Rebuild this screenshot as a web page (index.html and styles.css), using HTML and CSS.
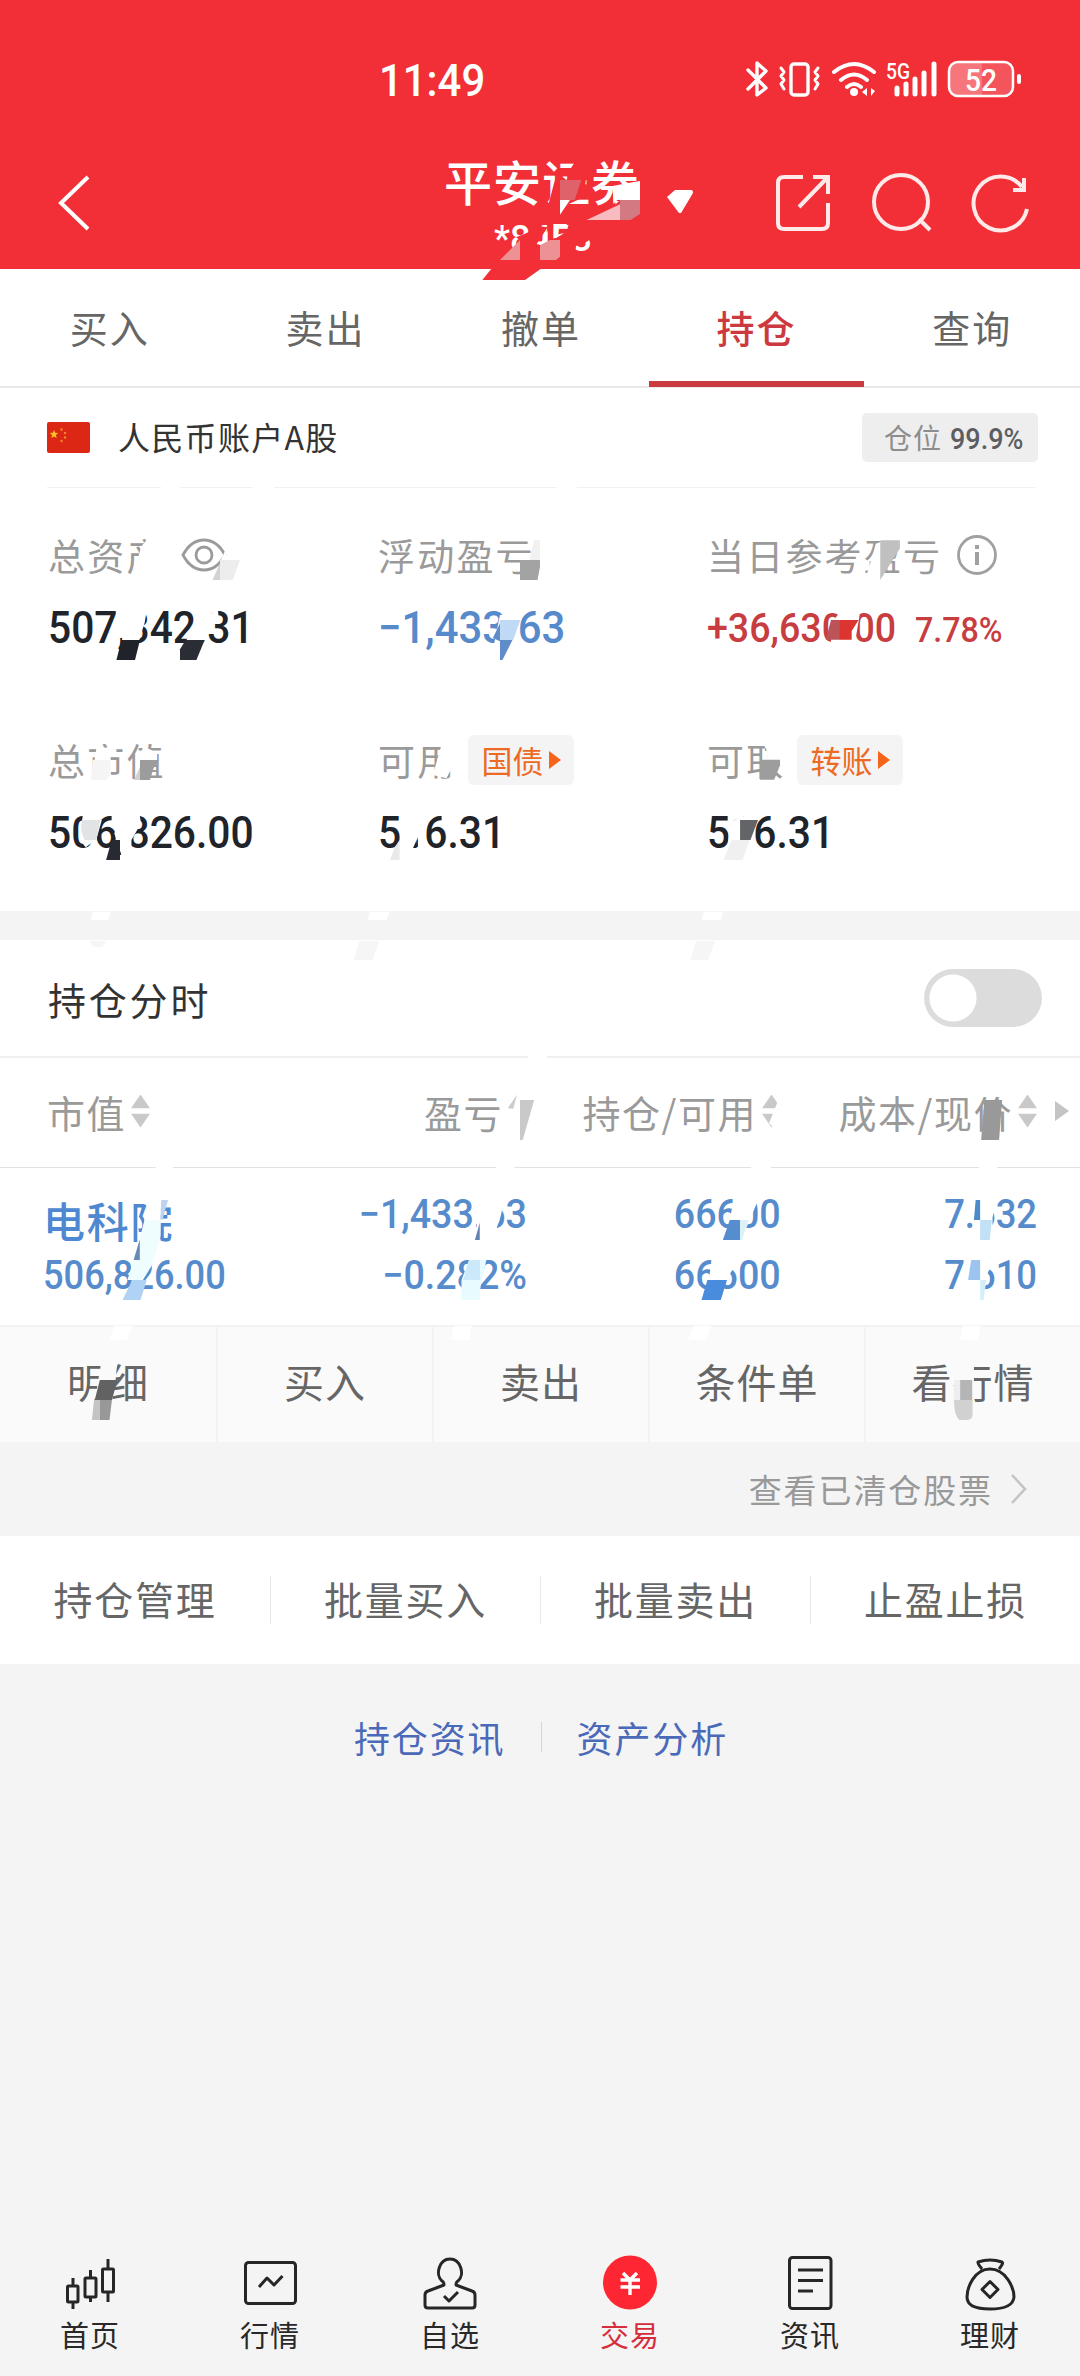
FILE: index.html
```html
<!DOCTYPE html>
<html lang="zh-CN">
<head>
<meta charset="utf-8">
<title>持仓</title>
<link rel="stylesheet" href="styles.css">
</head>
<body>
<div class="app">
  <header class="top">
    <div class="status">
      <span class="num clock">11:49</span>
      <svg class="status-icons" width="290" height="44" viewBox="740 57 290 44" fill="none" stroke="#fff" stroke-width="3.4" stroke-linecap="round" stroke-linejoin="round">
        <path d="M748 70L766 88L757 95V63L766 71L748 89"/>
        <rect x="791" y="64" width="17" height="31" rx="3"/>
        <path d="M781 68l3 4-3 4 3 4-3 4 3 5M818 68l-3 4 3 4-3 4 3 4-3 5" stroke-width="3"/>
        <path d="M834 72Q854 56 874 72M841 80Q854 69 867 80M847 87Q854 81 861 87" stroke-width="4"/>
        <circle cx="854" cy="92" r="3" fill="#fff" stroke-width="2"/>
        <path d="M867 88v8l-5-4zM871 88v8l4-5z" fill="#fff" stroke="none"/>
        <path d="M897 88v6M906 84v10M915 79v15M924 73v21M934 64v30" stroke-width="5"/>
        <rect x="949" y="62" width="64" height="34" rx="9" stroke-width="2.5" fill="#fff" fill-opacity=".18"/>
        <path d="M950 71q0-8 8-8h24v32h-24q-8 0-8-8z" fill="#fff" fill-opacity=".2" stroke="none"/>
        <path d="M1019 76v6" stroke-width="4"/>
        <text class="svg-num" x="886" y="79" font-size="22" textLength="24" lengthAdjust="spacingAndGlyphs">5G</text>
        <text class="svg-num" x="965" y="91" font-size="32" textLength="32" lengthAdjust="spacingAndGlyphs">52</text>
      </svg>
    </div>
    <div class="titlebar">
      <svg class="back" width="40" height="60" viewBox="0 0 40 60" fill="none" stroke="#fff" stroke-width="4"><path d="M34 4L7 30L34 56"/></svg>
      <div class="title"><h1>平安证券</h1><span class="num acct">*8453</span></div>
      <svg class="caret" width="28" height="26" viewBox="0 0 28 26"><path d="M9 1H26Q27 2 27 4L15 24H13L1 8Z" fill="#fff"/></svg>
      <svg class="tools" width="264" height="64" viewBox="769 170 264 64" fill="none" stroke="#ffe9e9" stroke-width="4">
        <path d="M802 177H783Q777 177 777 183V223Q777 229 783 229H821Q827 229 827 223V203M798 207L826 178M812 177H827V194"/>
        <ellipse cx="900" cy="202" rx="27" ry="27"/><path d="M918 219L929 230"/>
        <path d="M1026 209A27 27 0 1 1 1021 187M1023 178V190H1012"/>
      </svg>
    </div>
  </header>

  <nav class="tabs"><a>买入</a><a>卖出</a><a>撤单</a><a class="on">持仓</a><a>查询</a></nav>

  <section class="account">
    <svg width="43" height="31" viewBox="0 0 43 31"><rect width="43" height="31" rx="2" fill="#dc2715"/><path d="M7 8l1.2 2.8 3 .2-2.3 2 .8 3L7 14.400l-2.700 1.600.8-3-2.300-2 3-.2z" fill="#ffc321"/><g fill="#f08a24"><circle cx="14.500" cy="7.500" r="1.200"/><circle cx="18" cy="11" r="1.200"/><circle cx="18" cy="15.500" r="1.200"/><circle cx="14.500" cy="19" r="1.200"/></g></svg>
    <span class="account-name">人民币账户A股</span>
    <span class="badge">仓位<b class="num">99.9%</b></span>
  </section>

  <section class="stats">
    <div class="stat">
      <div class="label">总资产<svg class="eye" width="46" height="34" viewBox="0 0 46 34" fill="none" stroke="#9b9b9b" stroke-width="2.800"><path d="M2 17Q10 2 23 2T44 17Q36 32 23 32T2 17Z"/><circle cx="23" cy="17" r="8"/></svg></div>
      <div class="value"><span class="num">507,342.31</span></div>
    </div>
    <div class="stat">
      <div class="label">浮动盈亏</div>
      <div class="value blue"><span class="num">−1,433.63</span></div>
    </div>
    <div class="stat">
      <div class="label">当日参考盈亏<svg class="info" width="42" height="42" viewBox="0 0 42 42" fill="none" stroke="#a0a0a0" stroke-width="2.800"><circle cx="21" cy="21" r="18.500"/><path d="M21 18V31M21 11v4" stroke-width="4"/></svg></div>
      <div class="value red"><span class="num gain">+36,630.00</span><span class="num rate">7.78%</span></div>
    </div>
    <div class="stat">
      <div class="label">总市值</div>
      <div class="value"><span class="num">506,826.00</span></div>
    </div>
    <div class="stat">
      <div class="label">可用<span class="chip">国债<i></i></span></div>
      <div class="value"><span class="num">516.31</span></div>
    </div>
    <div class="stat">
      <div class="label">可取<span class="chip">转账<i></i></span></div>
      <div class="value"><span class="num">516.31</span></div>
    </div>
  </section>

  <section class="intraday"><span>持仓分时</span><span class="switch"></span></section>

  <section class="thead">
    <span class="c1">市值<i class="sort"></i></span>
    <span class="c2">盈亏<i class="sort"></i></span>
    <span class="c3">持仓/可用<i class="sort"></i></span>
    <span class="c4">成本/现价<i class="sort"></i></span>
    <i class="more"></i>
  </section>

  <section class="holding">
    <div class="c1"><strong>电科院</strong><span class="num">506,826.00</span></div>
    <div class="c2"><span class="num">−1,433.63</span><span class="num">−0.282%</span></div>
    <div class="c3"><span class="num">66600</span><span class="num">66600</span></div>
    <div class="c4"><span class="num">7.632</span><span class="num">7.610</span></div>
  </section>

  <nav class="actions"><a>明细</a><a>买入</a><a>卖出</a><a>条件单</a><a>看行情</a></nav>

  <div class="cleared"><span>查看已清仓股票</span><svg width="20" height="34" viewBox="0 0 20 34" fill="none" stroke="#c4c4c4" stroke-width="2.500"><path d="M3 3L16 17L3 31"/></svg></div>

  <nav class="batch"><a>持仓管理</a><a>批量买入</a><a>批量卖出</a><a>止盈止损</a></nav>

  <div class="links"><a>持仓资讯</a><i></i><a>资产分析</a></div>

  <footer class="bottom">
    <a><svg width="60" height="60" viewBox="60 2254 60 60" class="line"><rect x="67.500" y="2286" width="10.500" height="16" rx="1"/><path d="M73 2278v8M73 2302v7"/><rect x="85" y="2278" width="11" height="19" rx="1"/><path d="M90.500 2270v8M90.500 2297v5"/><rect x="102.500" y="2269" width="11" height="23" rx="1"/><path d="M108 2259v10M108 2292v10"/></svg>首页</a>
    <a><svg width="60" height="60" viewBox="240 2254 60 60" class="line"><rect x="245.500" y="2262.500" width="50" height="41" rx="3"/><path d="M259 2287l8-9 7 7 8.500-9"/></svg>行情</a>
    <a><svg width="60" height="60" viewBox="421 2254 60 60" class="line"><path d="M445 2285Q445 2282 443 2281C436 2275 440 2259 451 2259S466 2275 459 2281Q457 2282 457 2285L473 2291Q476 2292 476 2295V2305Q476 2308 473 2308H429Q426 2308 426 2305V2295Q426 2292 429 2291Z"/><path d="M445 2296l5 5 9-9"/></svg>自选</a>
    <a class="on"><svg width="60" height="60" viewBox="601 2254 60 60"><circle cx="631" cy="2282.500" r="27" fill="#ff2634"/><path d="M624 2273l7 7 7-7M621.500 2280h19.500M621.500 2287h19.500M631 2279v16" fill="none" stroke="#fff" stroke-width="3.400"/></svg>交易</a>
    <a><svg width="60" height="60" viewBox="782 2254 60 60" class="line"><rect x="791.500" y="2257.500" width="41.500" height="51" rx="3"/><path d="M800 2270h25M800 2280.500h25M800 2291h15"/></svg>资讯</a>
    <a><svg width="60" height="60" viewBox="962 2254 60 60" class="line"><path d="M984 2269Q979 2263 980 2262Q992 2258 1004 2262Q1006 2263 1001 2269M992 2269C976 2269 969 2288 969 2297Q969 2309 992 2309T1016 2297C1016 2288 1008 2269 992 2269Z"/><path d="M992 2281.500l8 8-8 8-8-8z"/></svg>理财</a>
  </footer>

  <!-- loose paper-cut fragments scattered over the page -->
  <svg class="shards" width="1080" height="1440" viewBox="0 0 1080 1440">
    <g transform="translate(420 140) scale(.33333)">
      <path d="M468 60H515V118H498L494 145L478 178L440 195L385 195L402 130L412 100L440 120L448 92ZM585 195L660 120V240H500ZM300 300L288 292L308 284L328 275V255L383 262L350 312L372 318L398 300L440 275L448 245H516V295L490 312L468 318L465 345H290ZM216 384H366L315 420H187Z" fill="#f22f37"/>
      <path d="M400 252H440V264H412V290L400 296ZM383 272V305L360 314Z" fill="#fff"/>
      <path d="M300 300V360H240ZM360 316L390 300H420V350L408 360H360Z" fill="#ee9194"/>
      <path d="M420 180H450L420 224Z" fill="#fff"/>
      <path d="M420 120H484L464 180H420Z" fill="#df626b"/>
      <path d="M578 138L620 130L660 123V180H592L580 192Z" fill="#fff"/>
      <path d="M500 240L600 193V240Z" fill="#f8bcc0"/><path d="M600 180H660V222L632 240H600Z" fill="#d27981"/>
    </g>
    <g transform="translate(0 500) scale(.35714 .33333)">
      <path d="M395 140L412 118L455 112V220H375ZM625 165L635 140V180H618Z" fill="#fff"/>
      <path d="M595 240L616 190V240Z" fill="#d2d2d2"/><path d="M616 180H672L652 240H616Z" fill="#ededed"/>
      <path d="M1482 180L1496 120H1512V180Z" fill="#f1f1f1"/><path d="M1456 180H1512V200L1505 240H1456Z" fill="#a3a3a3"/>
      <path d="M342 400L350 325H412L405 368L390 420H342ZM545 378L610 325L612 350L583 385L580 420H522Z" fill="#fff"/>
      <path d="M340 420H392L378 480H326Z" fill="#202329"/><path d="M520 420H573L550 480H504V448Z" fill="#2b2d34"/>
      <path d="M1400 345H1450V450H1380Z" fill="#fff"/><path d="M1400 360H1457L1437 420H1400Z" fill="#c0daf5"/><path d="M1400 420H1435L1407 480H1400ZM1380 414L1400 370V424Z" fill="#608dca"/>
      <path d="M270 745L255 840H310V765H326V740ZM390 770L402 738L440 760V780H392Z" fill="#fff"/><path d="M260 780H310V820L298 840H254Z" fill="#f5f5f5"/>
      <path d="M392 780H445L430 805L420 840H392Z" fill="#9c9c9c"/><path d="M375 840L392 800V840Z" fill="#d1d1d1"/>
      <path d="M1236 735L1212 825L1250 835L1263 808V735Z" fill="#fff"/>
      <path d="M232 945L285 960L270 1018L240 1042L222 1018Z" fill="#fff"/><path d="M230 960H281L270 1020H237Q222 990 230 960Z" fill="#e1e3e5"/>
      <path d="M320 1000L350 940H390L395 970L368 1020V1065H340Z" fill="#fff"/><path d="M313 1020H336V1080H297Z" fill="#272a31"/>
      <path d="M1120 935H1198L1170 1012L1155 1048H1120Z" fill="#fff"/><path d="M1170 1012V1041H1162Z" fill="#202329"/><path d="M1106 1040L1119 1020V1080H1092Z" fill="#e8e9ea"/>
    </g>
    <g transform="translate(540 370) scale(.34439)">
      <path d="M975 505L1000 494V590H950Z" fill="#fff"/><path d="M1000 494H1045V518L1022 555L988 610V495Z" fill="#c0c0c0"/>
      <path d="M870 705L930 700L915 790H845V735Z" fill="#fff"/><path d="M845 726H872V783H830Z" fill="#bc5359"/><path d="M870 726H925L905 758V783H870Z" fill="#dc342f"/>
      <path d="M655 1090H710V1150H665Z" fill="#fff"/><path d="M639 1132H697V1148L680 1190H639Z" fill="#9d9d9d"/>
      <path d="M550 1315L582 1298L636 1285L618 1345L600 1395H545Z" fill="#fff"/><path d="M581 1307H633L611 1365H581Z" fill="#626468"/><path d="M556 1365H609L588 1423H533Z" fill="#f0f0f0"/>
    </g>
    <g transform="translate(0 900) scale(.34439 .35714)">
      <path d="M268 33H322L314 56H264ZM1073 33H1132L1122 56H1068Z" fill="#fff"/><path d="M262 115H310L295 132H270ZM1042 115H1101L1082 168H1028Z" fill="#f6f6f6"/>
      <path d="M1501 547L1475 600L1482 612L1478 645H1555V530Z" fill="#fff"/><path d="M1510 560H1551L1518 672H1510Z" fill="#c9c9c9"/><path d="M1475 582L1501 547L1490 585Z" fill="#ccc"/>
      <path d="M452 745H503L498 758H452ZM1440 745H1494V758H1440ZM1533 436H1588V446H1533Z" fill="#fff"/>
      <path d="M429 845L408 955L465 955L468 840Z" fill="#fff"/><path d="M468 840H488L472 895H466Z" fill="#bad4f2"/><path d="M388 1008L420 897H466V940L440 1025L415 1064H370Z" fill="#f0fdff"/><path d="M406 950V1008H388Z" fill="#6689b8"/><path d="M384 1064H426L408 1120H356Z" fill="#b0d2f4"/>
      <path d="M1385 835H1465L1454 885L1440 925H1385Z" fill="#fff"/><path d="M1393 904V952H1379Z" fill="#6284b5"/><path d="M1362 1008H1412L1394 1090V1120H1340V1064Z" fill="#e8fbff"/><path d="M1362 1008H1394V1064H1345Z" fill="#cbe9fa"/>
      <path d="M332 1192H385L370 1232H318ZM1318 1192H1370L1362 1232H1309Z" fill="#fff"/>
      <path d="M293 1300L340 1300L335 1350L325 1405H275Z" fill="#fafafa"/><path d="M290 1344H341L325 1400H275Z" fill="#626262"/><path d="M273 1400H290V1456H267Z" fill="#c4c4c4"/><path d="M290 1400H325L318 1456H290Z" fill="#989898"/>
    </g>
    <g transform="translate(540 900) scale(.34439 .35714)">
      <path d="M476 33H531L525 56H470ZM690 565L665 625L682 640H708V540H685Z" fill="#fff"/><path d="M453 115H508L488 168H436Z" fill="#f6f6f6"/>
      <path d="M615 745H670V758H608ZM1275 745H1327V758H1275Z" fill="#fff"/><path d="M1290 560H1342L1333 672H1281Z" fill="#999"/>
      <path d="M563 835L630 830V848L605 905L595 925H545Z" fill="#fff"/><path d="M551 896H581V952H531Z" fill="#568dcf"/><path d="M581 896H605L587 952H581Z" fill="#dcf2f8"/>
      <path d="M500 1000H580L550 1050L536 1064H490Z" fill="#fff"/><path d="M486 1064H543L525 1120H469Z" fill="#498bdc"/>
      <path d="M1260 835H1326L1314 890V920H1260Z" fill="#fff"/><path d="M1265 840H1278V896H1260Z" fill="#4b89cb"/><path d="M1278 896H1312L1306 952H1278Z" fill="#c2e1f6"/>
      <path d="M1238 1000H1320L1300 1045L1290 1095H1238Z" fill="#fff"/><path d="M1252 1008H1278V1064H1243Z" fill="#9dc3f0"/><path d="M1278 1064H1296L1288 1120H1278Z" fill="#d4eff9"/>
      <path d="M445 1192H498L483 1232H430ZM1228 1192H1280L1272 1232H1220Z" fill="#fff"/>
      <path d="M1202 1290H1260V1410H1202Z" fill="#fafafa"/><path d="M1202 1344H1220V1400H1202Z" fill="#eee"/><path d="M1220 1344H1255V1400H1220Z" fill="#b5b5b5"/><path d="M1202 1400H1256V1440Q1256 1456 1240 1456H1218Q1202 1445 1202 1400Z" fill="#d1d1d1"/>
    </g>
  </svg>
</div>
</body>
</html>
```
FILE: styles.css
```css
* { box-sizing: border-box; }
body { margin: 0; background: #f4f4f4; font-family: "Noto Sans CJK SC", sans-serif; }
.app { position: relative; width: 1080px; height: 2376px; display: flex; flex-direction: column; overflow: hidden; }
a { color: inherit; text-decoration: none; }
svg { flex: none; display: block; }
.num { font-family: Roboto, sans-serif; font-weight: 500; display: inline-block; transform: scaleX(.905); transform-origin: left center; white-space: nowrap; }
.svg-num { font-family: Roboto, sans-serif; font-weight: 500; fill: #fff; stroke: none; }

.top { height: 269px; background: #f22f37; color: #fff; flex: none; }
.status { height: 132px; padding: 57px 50px 0 379px; display: flex; justify-content: space-between; }
.clock { font-size: 45px; line-height: 48px; transform: scaleX(.93); }
.titlebar { height: 137px; padding: 20px 46px 0 54px; display: flex; align-items: flex-start; }
.back { margin-top: 21px; }
.title { width: 200px; margin-left: 348px; display: flex; flex-direction: column; align-items: center; }
.title h1 { margin: -3px 0 0; font-size: 48px; line-height: 62px; font-weight: 500; letter-spacing: 1px; white-space: nowrap; }
.acct { margin-top: 6px; padding-left: 2px; font-size: 36px; line-height: 44px; transform: none; }
.caret { margin: 37px 0 0 24px; }
.tools { margin: 18px 0 0 auto; }

.tabs { height: 119px; flex: none; background: #fff; border-bottom: 2px solid #eaeaea; display: grid; grid-template-columns: repeat(5, 1fr); font-size: 38px; letter-spacing: 2px; color: #666; text-align: center; line-height: 115px; padding-left: 2px; }
.tabs .on { color: #cc3a3f; border-bottom: 6px solid #c93b3f; height: 118px; font-weight: 500; }

.account { height: 100px; flex: none; background: linear-gradient(#f1f1f1, #f1f1f1) 47px 99px / 114px 1px no-repeat, linear-gradient(#f1f1f1, #f1f1f1) 180px 99px / 73px 1px no-repeat, linear-gradient(#f1f1f1, #f1f1f1) 274px 99px / 283px 1px no-repeat, linear-gradient(#f1f1f1, #f1f1f1) 577px 99px / 458px 1px no-repeat, #fff; padding: 0 42px 2px 47px; display: flex; align-items: center; color: #333; }
.account-name { margin-left: 28px; padding-bottom: 2px; font-size: 32px; letter-spacing: 1.300px; }
.badge { margin-left: auto; width: 176px; height: 49px; padding-left: 22px; border-radius: 5px; background: #eeeeef; color: #8d8d8d; font-size: 28px; line-height: 48px; letter-spacing: 1px; white-space: nowrap; }
.badge .num { margin-left: 8px; font-size: 29px; letter-spacing: 0; color: #5c5e62; transform: scaleX(.93); }

.stats { height: 423px; flex: none; background: #fff; padding: 42px 0 0 48px; display: grid; grid-template-columns: 330px 329px 1fr; grid-auto-rows: 205px; }
.label { height: 52px; display: flex; align-items: center; font-size: 37px; letter-spacing: 2.200px; color: #9a9a9a; line-height: 52px; white-space: nowrap; margin-top: -1px; }
.value { height: 88px; display: flex; align-items: center; font-size: 45px; line-height: 88px; color: #202329; margin-top: 3px; }
.value.blue { color: #568acb; }
.value.blue .num { transform: scaleX(.93); }
.value.red { color: #c83d40; }
.gain { font-size: 41.500px; width: 208px; }
.value .rate { font-size: 35px; padding-top: 5px; transform: scaleX(.92); }
.eye { margin-left: 15px; }
.info { margin-left: 14px; }
.chip { height: 50px; width: 106px; margin-left: 12px; padding-left: 13px; display: flex; align-items: center; border-radius: 6px; background: #f4f4f4; color: #ed6a24; font-size: 31px; letter-spacing: 0; line-height: 48px; }
.chip i { margin-left: 6px; border-left: 12px solid #f7651b; border-top: 9px solid transparent; border-bottom: 9px solid transparent; }

.intraday { height: 147px; flex: none; background: #fff; border-top: 29px solid #f4f4f4; border-bottom: 2px solid #f0f0f0; padding: 0 38px 0 48px; display: flex; align-items: center; justify-content: space-between; font-size: 38px; letter-spacing: 2.800px; color: #333; }
.switch { width: 118px; height: 58px; border-radius: 29px; background: radial-gradient(circle at 29px 29px, #fff 23px, #dcdcdc 24px); }

.thead, .holding { display: grid; grid-template-columns: 300px 227px 254px 256px 1fr; }
.thead { height: 110px; flex: none; background: #fff; border-bottom: 1px solid #e2e2e2; align-items: center; color: #9a9a9a; font-size: 38px; letter-spacing: 1.500px; white-space: nowrap; padding-bottom: 3px; }
.thead span { display: flex; align-items: center; justify-content: flex-end; }
.thead .c1 { justify-content: flex-start; padding-left: 47px; }
.sort { width: 19px; height: 33px; margin-left: 5px; background: #c9c9c9; clip-path: polygon(50% 0, 100% 42%, 0 42%, 0 58%, 100% 58%, 50% 100%, 0 58%, 0 42%); }
.more { margin-left: 18px; width: 14px; height: 20px; background: #c4c4c4; clip-path: polygon(0 0, 100% 50%, 0 100%); }

.holding { height: 157px; flex: none; background: #fff; padding-top: 16px; color: #568ccc; }
.holding > div { display: grid; grid-template-rows: 61px 61px; align-items: center; justify-items: end; }
.holding > .c1 { justify-items: start; padding-left: 43px; }
.holding strong { font-size: 42px; font-weight: 500; letter-spacing: 1.800px; color: #4d88d0; line-height: 61px; padding-top: 10px; }
.holding .num { font-size: 40px; line-height: 61px; transform: scaleX(.94); transform-origin: right center; }
.holding .c1 .num { transform: scaleX(.905); transform-origin: left center; }
.holding .c4 .num { transform: scaleX(.91); }

.actions { height: 117px; flex: none; display: grid; grid-template-columns: repeat(5, 1fr); background: #fafafa; border-top: 2px solid #f3f3f3; color: #666; font-size: 40px; letter-spacing: 1px; text-align: center; line-height: 108px; }
.actions a + a { border-left: 2px solid #f2f2f2; }

.cleared { height: 94px; flex: none; padding-right: 51px; display: flex; align-items: center; justify-content: flex-end; gap: 16px; color: #999; font-size: 33px; letter-spacing: 1.900px; }
.batch { height: 128px; flex: none; background: #fff; display: grid; grid-template-columns: repeat(4, 1fr); align-items: center; text-align: center; color: #666; font-size: 39px; letter-spacing: 1.800px; }
.batch a { line-height: 44px; height: 48px; }
.batch a + a { border-left: 1px solid #e9e9e9; }
.links { height: 146px; flex: none; display: flex; align-items: center; justify-content: center; gap: 35px; color: #4a69b8; font-size: 36px; letter-spacing: 1.900px; padding-left: 2px; }
.links i { width: 1px; height: 30px; background: #d5d5d5; }

.bottom { height: 140px; margin-top: auto; flex: none; border-top: 1px solid #f2f2f2; padding-top: 17px; display: grid; grid-template-columns: repeat(6, 1fr); color: #292929; font-size: 29px; letter-spacing: 1px; line-height: 40px; text-align: center; }
.bottom svg { margin: 0 auto; }
.bottom .on { color: #d52d3b; }
.line { fill: none; stroke: #262626; stroke-width: 3; stroke-linejoin: round; }

.shards { position: absolute; left: 0; top: 0; pointer-events: none; }
```
